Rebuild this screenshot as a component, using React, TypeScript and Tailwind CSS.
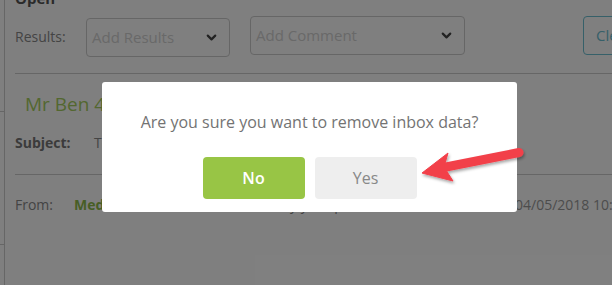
import { ChevronDown } from 'lucide-react';

function Select({ label, className }: { label: string; className: string }) {
  return (
    <div className={`flex shrink-0 items-center justify-between h-[39px] border border-[#cccccc] rounded-[4px] pl-[5px] pr-[10px] ${className}`}>
      <span className="text-[#d2d2d2] text-[15px]">{label}</span>
      <ChevronDown className="w-[15px] h-[15px] text-[#444]" strokeWidth={3.5} />
    </div>
  );
}

export default function App() {
  return (
    <main className="relative w-[612px] h-[285px] overflow-hidden bg-white font-['Open_Sans',sans-serif]">
      <div className="flex h-full">
        {/* left panel edge */}
        <div className="w-[5px] shrink-0 border-r border-[#cccccc] flex flex-col">
          <div className="h-[112px] border-b border-[#cccccc]" />
          <div className="h-[133px] border-b border-[#cccccc]" />
        </div>

        <div className="flex-1 pl-[10px] min-w-0">
          <div className="-mt-[12px] h-[20px] text-[15px] font-bold text-[#555] leading-[20px]">Open</div>

          <div className="flex items-start mt-[8px] whitespace-nowrap">
            <span className="w-[71px] shrink-0 mt-[10px] text-[14px] text-[#888]">Results:</span>
            <Select label="Add Results" className="w-[144px] mt-[2px]" />
            <Select label="Add Comment" className="w-[215px] ml-[20px]" />
            <div className="ml-[118px] h-[39px] w-[70px] shrink-0 border border-[#6cc0d2] rounded-[4px] pl-[12px] flex items-center text-[15px] text-[#6cc0d2]">
              Clear
            </div>
          </div>

          <div className="mt-[16px] border-t border-[#cccccc]" />

          <div className="pl-[10px] mt-[17px] text-[19px] text-[#a7cf61] leading-[26px]">Mr Ben 45 Test Patient</div>

          <div className="flex mt-[16px] text-[14px] leading-[20px]">
            <span className="w-[79px] font-bold text-[#777]">Subject:</span>
            <span className="text-[#888]">Test results</span>
          </div>

          <div className="mt-[21px] border-t border-[#cccccc]" />

          <div className="flex items-center mt-[20px] text-[14px] leading-[20px] whitespace-nowrap">
            <span className="w-[59px] text-[#888]">From:</span>
            <span className="font-bold text-[#8ebc4a]">Medical Practice</span>
            <span className="ml-[60px] text-[#888]">Sent by your practice</span>
            <span className="ml-auto text-[#999] w-[97px] overflow-hidden">04/05/2018 10:32</span>
          </div>
        </div>
      </div>

      {/* backdrop */}
      <div className="absolute inset-0 bg-black/50" />

      {/* dialog */}
      <div className="absolute left-[102px] top-[82px] w-[415px] bg-white rounded-[3px] pt-[28px] pb-[13px] flex flex-col items-center">
        <p className="text-[16px] leading-[24px] text-[#737373]">Are you sure you want to remove inbox data?</p>
        <div className="flex gap-[10px] mt-[23px]">
          <button className="w-[102px] h-[42px] rounded-[4px] bg-[#98c545] text-white text-[16px] font-semibold">No</button>
          <button className="w-[102px] h-[42px] rounded-[4px] bg-[#eeeeee] text-[#888] text-[16px]">Yes</button>
        </div>
      </div>

      {/* annotation arrow */}
      <svg className="absolute inset-0 pointer-events-none" width="612" height="285" viewBox="0 0 612 285">
        <defs>
          <filter id="shadow" x="-20%" y="-50%" width="140%" height="200%">
            <feDropShadow dx="1" dy="2" stdDeviation="1.5" floodColor="#000" floodOpacity="0.35" />
          </filter>
        </defs>
        <g filter="url(#shadow)" fill="#f2404a" stroke="#f2404a">
          <line x1="446" y1="167" x2="519" y2="152.5" strokeWidth="9" strokeLinecap="round" />
          <polygon points="422,173 448,153 444,167 453,181" strokeWidth="1" strokeLinejoin="round" />
        </g>
      </svg>
    </main>
  );
}
